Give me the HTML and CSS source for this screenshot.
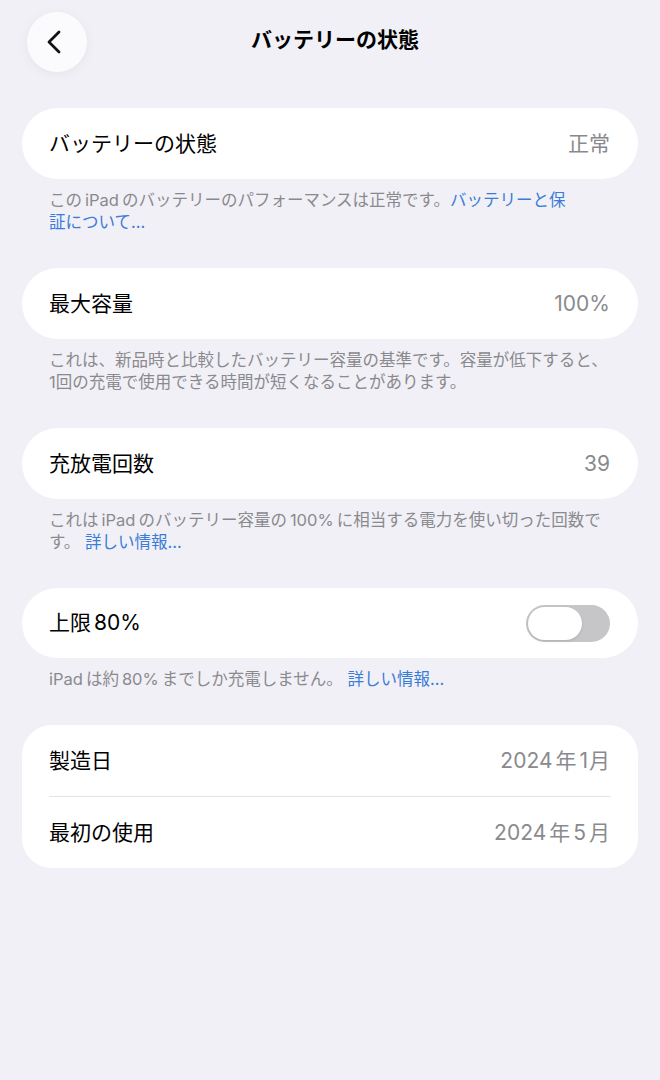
FILE: index.html
```html
<!DOCTYPE html>
<html lang="ja">
<head>
<meta charset="utf-8">
<title>バッテリーの状態</title>
<link rel="stylesheet" href="styles.css">
</head>
<body>
<header class="nav">
  <div class="back">
    <svg width="20" height="26" viewBox="0 0 20 26"><path d="M14 3 L4 13 L14 23" fill="none" stroke="#111" stroke-width="2.8" stroke-linecap="round" stroke-linejoin="round"/></svg>
  </div>
  <h1 class="title">バッテリーの状態</h1>
</header>
<main class="content">
  <section class="group">
    <div class="card pill"><div class="row"><span class="label">バッテリーの状態</span><span class="value">正常</span></div></div>
    <p class="note">この<span class="lat">iPad</span>のバッテリーのパフォーマンスは正常です。<a class="link">バッテリーと保<br>証について...</a></p>
  </section>
  <section class="group">
    <div class="card pill"><div class="row"><span class="label">最大容量</span><span class="value">100%</span></div></div>
    <p class="note">これは、新品時と比較したバッテリー容量の基準です。容量が低下すると、<br>1回の充電で使用できる時間が短くなることがあります。</p>
  </section>
  <section class="group">
    <div class="card pill"><div class="row"><span class="label">充放電回数</span><span class="value">39</span></div></div>
    <p class="note">これは<span class="lat">iPad</span>のバッテリー容量の<span class="lat">100%</span>に相当する電力を使い切った回数で<br>す。 <a class="link">詳しい情報...</a></p>
  </section>
  <section class="group">
    <div class="card pill"><div class="row row-short"><span class="label">上限<span class="lat">80%</span></span><span class="toggle"><span class="knob"></span></span></div></div>
    <p class="note"><span class="lat lat-first">iPad</span>は約<span class="lat">80%</span>までしか充電しません。 <a class="link">詳しい情報...</a></p>
  </section>
  <section class="group">
    <div class="card rounded">
      <div class="row"><span class="label">製造日</span><span class="value"><span class="lat lat-first">2024</span>年<span class="lat lat-r">1</span>月</span></div>
      <div class="sep"></div>
      <div class="row"><span class="label">最初の使用</span><span class="value"><span class="lat lat-first">2024</span>年<span class="lat">5</span>月</span></div>
    </div>
  </section>
</main>
</body>
</html>
```
FILE: styles.css
```css
* { box-sizing: border-box; }
html, body { margin: 0; padding: 0; }
body {
  background: #f1f0f6;
  font-family: Inter, "Noto Sans CJK JP", "Noto Sans", sans-serif;
  color: #000;
  width: 660px;
  min-height: 1080px;
}
.nav {
  position: relative;
  height: 108px;
  padding: 12px 0 0 27px;
}
.back {
  width: 60px;
  height: 60px;
  border-radius: 50%;
  background: #fbfbfd;
  box-shadow: 0 2px 12px rgba(0, 0, 0, 0.05);
  display: flex;
  align-items: center;
  justify-content: center;
}
.back svg { margin-left: -4px; }
.title {
  position: absolute;
  left: 0;
  right: 0;
  top: 24px;
  margin: 0;
  text-align: center;
  font-size: 21px;
  font-weight: 700;
  line-height: 32px;
  padding-left: 10px;
}
.content {
  padding: 0 22px;
}
.group { margin-bottom: 35px; }
.card {
  background: #fff;
}
.pill { border-radius: 36px; }
.rounded { border-radius: 30px; }
.row {
  height: 71px;
  display: flex;
  align-items: center;
  justify-content: space-between;
  padding: 0 28px 0 27px;
}
.row-short { height: 70px; padding-right: 28px; }
.label {
  font-size: 21px;
  line-height: 30px;
}
.value {
  font-size: 21px;
  line-height: 30px;
  color: #8a8a8e;
}
.lat { margin: 0 3px; }
.lat-first { margin-left: 0; }
.lat-r { margin-right: 1px; }
.sep {
  height: 1px;
  background: #e3e3e6;
  margin: 0 27px 0 27px;
}
.note {
  margin: 10px 0 0 0;
  padding: 0 10px 0 27px;
  font-size: 16.5px;
  line-height: 22px;
  color: #8a8a8e;
}
.link { color: #3a7cd8; }
.toggle {
  width: 84px;
  height: 37px;
  border-radius: 19px;
  background: #c6c6c8;
  padding: 2px;
  display: flex;
}
.knob {
  width: 54px;
  height: 33px;
  border-radius: 17px;
  background: #fff;
  box-shadow: 0 1px 3px rgba(0, 0, 0, 0.12);
}
```
